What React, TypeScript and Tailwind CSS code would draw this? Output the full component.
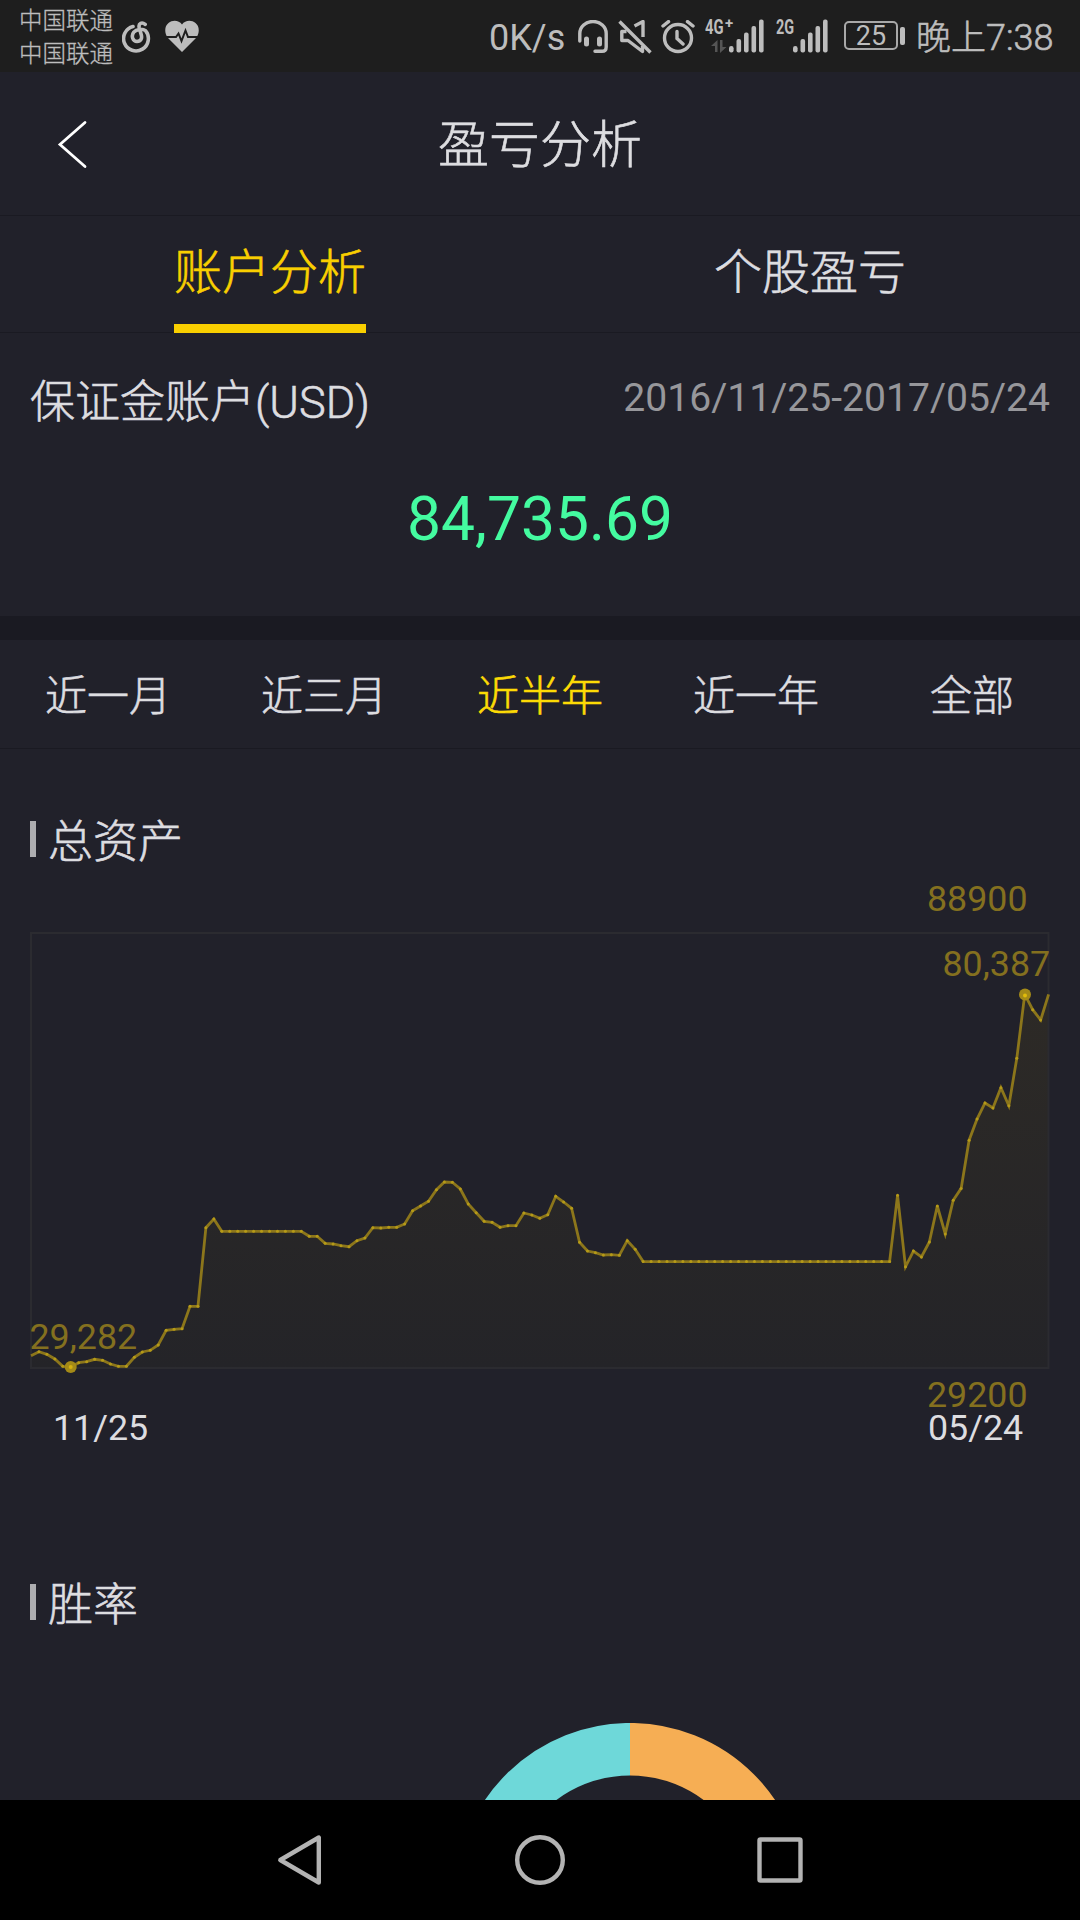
import clsx from "clsx";

const tabs = ["账户分析", "个股盈亏"];
const ranges = ["近一月", "近三月", "近半年", "近一年", "全部"];

// line heights of the asset curve, one per trading day
const curve = [
    1355.7, 1351.7, 1354.3, 1359, 1366.3, 1367, 1362.7, 1361.7, 1359.3, 1360.3, 1364, 1366.3, 1366.3,
    1357.3, 1352, 1350.3, 1345, 1330.3, 1329.3, 1328.7, 1306.3, 1306.3, 1227.7, 1219,
    ...Array(11).fill(1231.3),
    1236.3, 1236.3, 1243.3, 1244, 1245.7, 1246.7, 1240.7, 1238, 1227.7, 1228, 1227.3, 1227.3, 1224,
    1210.7, 1206, 1201.3, 1189.7, 1182, 1182.3, 1189, 1204, 1212.7, 1221.3, 1222.3, 1227.3, 1225.7,
    1225.7, 1213, 1215, 1218.3, 1214.7, 1196.3, 1202, 1208.3, 1242.3, 1251, 1252.7, 1255, 1254.7,
    1255.3, 1240.7, 1249.3,
    ...Array(32).fill(1261.6),
    1195.3, 1266.8, 1251.1, 1256.9, 1242, 1206, 1233.9, 1200.2, 1188.4, 1140.2, 1119.1, 1103, 1108,
    1087.7, 1105.7, 1058.3, 994.4, 1009.7, 1020, 994.4,
];
const points = curve.map((y, i) => [31 + i * 7.95, y]);
const line = points.map((p) => p.join(",")).join(" ");

function Signal() {
    return (
        <svg className="w-[35px] h-[34px]" viewBox="0 0 35 34" fill="#bdbdbd">
            <rect x="0" y="27" width="4.6" height="6.5" rx="2.2"/>
            <rect x="7.5" y="20" width="4.6" height="13.5" rx="2"/>
            <rect x="15" y="13.5" width="4.6" height="20" rx="2"/>
            <rect x="22.5" y="7" width="4.6" height="26.5" rx="2"/>
            <rect x="30" y="0.5" width="4.6" height="33" rx="2"/>
        </svg>
    )
}

function StatusBar() {
    return (
        <div className="flex items-start h-[72px] bg-[#1e1e1e] text-[#bdbdbd]">
            <div className="w-[94px] ml-[19px] pt-[5px] text-[23.5px] leading-[33px] font-light [-webkit-text-stroke:0.3px] whitespace-nowrap">
                <div>中国联通</div>
                <div>中国联通</div>
            </div>
            <svg className="w-[30px] h-[32px] ml-[9px] mt-[21px]" viewBox="0 0 30 32" fill="none" stroke="#bdbdbd"
                 strokeWidth="3.6" strokeLinecap="round">
                <path d="M11 5.5A12.4 12.4 0 1 0 23.5 9.6C20.5 7.5 14.5 8 11.8 11.2C8.8 15 10.8 20.5 15 20.5C19 20.5 20.3 17.2 19.2 13.6L17.2 6.5C16.2 2.2 20 .8 23.2 3.4"/>
            </svg>
            <svg className="w-[34px] h-[32px] ml-[13px] mt-[20px]" viewBox="0 0 34 32">
                <path fill="#bdbdbd"
                      d="M17 32L3 18C-1 13 -.5 6 3.5 3C8 -.5 14 .5 17 4.5C20 .5 26 -.5 30.5 3C34.5 6 35 13 31 18Z"/>
                <path d="M0 17H11L13.5 13.5L16.5 21L20.5 10.5L23 17H34" fill="none" stroke="#1e1e1e" strokeWidth="2"/>
            </svg>
            <div className="w-[76px] ml-[290px] pt-[18px] text-[36px] leading-[40px]">0K/s</div>
            <svg className="w-[30px] h-[34px] ml-[13px] mt-[20px]" viewBox="0 0 30 34" fill="none" stroke="#bdbdbd"
                 strokeWidth="3.4" strokeLinecap="round">
                <path d="M1.8 21V13.5A13.2 12 0 0 1 28.2 13.5V27Q28.2 31.3 24 31.3H17"/>
                <path strokeWidth="5" d="M8.5 19V24M21.5 19V24"/>
            </svg>
            <svg className="w-[34px] h-[34px] ml-[10px] mt-[20px]" viewBox="0 0 34 34" fill="none" stroke="#bdbdbd"
                 strokeWidth="3.4" strokeLinejoin="round">
                <path d="M16.5 6L25 1.5V17M8.5 11.5H3.8V20.5H10L24.5 31.5V26"/>
                <path d="M1.5 1.5L32.5 32.5"/>
            </svg>
            <svg className="w-[34px] h-[34px] ml-[9px] mt-[20px]" viewBox="0 0 34 34" fill="none" stroke="#bdbdbd"
                 strokeWidth="3.4" strokeLinecap="round">
                <circle cx="17" cy="18" r="13.5"/>
                <path d="M16 11.5V18.5L22 24M2 6L7.5 1.6M32 6L26.5 1.6"/>
            </svg>
            <div className="relative w-[60px] ml-[10px] mt-[19px] pl-[24px]">
                <Signal/>
                <span className="absolute left-0 -top-[2px] text-[20px] leading-[20px] font-bold scale-x-[0.74] origin-left">4G</span>
                <span className="absolute left-[20px] -top-[5px] text-[15px] leading-[18px] font-bold">+</span>
                <svg className="absolute left-[6px] top-[21px] w-[16px] h-[13px]" viewBox="0 0 16 13" fill="#555">
                    <path d="M0 6L6.5 0V12H4V6ZM9 0H11.5V7H15.5L9 13Z"/>
                </svg>
            </div>
            <div className="relative w-[52px] ml-[11px] mt-[19px] pl-[17px]">
                <Signal/>
                <span className="absolute left-0 -top-[2px] text-[20px] leading-[20px] font-bold scale-x-[0.72] origin-left">2G</span>
            </div>
            <div className="flex items-center ml-[16px] mt-[21px]">
                <div className="flex items-center justify-center w-[54px] h-[29px] pt-[2px] border-2 border-[#a8a8a8] rounded-[5px] text-[27px] leading-[27px]">25</div>
                <div className="w-[5px] h-[18px] ml-[2px] bg-[#bdbdbd] rounded-[2px]"/>
            </div>
            <div className="ml-[11px] pt-[18px] text-[36px] leading-[40px] font-light [-webkit-text-stroke:0.6px] whitespace-nowrap"><span className="text-[35px]">晚上</span>7:38</div>
        </div>
    )
}

function SectionTitle({text}: { text: string }) {
    return (
        <div className="flex items-center h-[54px] px-[30px]">
            <div className="w-[6px] h-[36px] mr-[12px] bg-[#adadb0]"/>
            <div className="pt-[7px] text-[45px] leading-[54px] font-light [-webkit-text-stroke:0.6px]">{text}</div>
        </div>
    )
}

function AssetChart() {
    return (
        <svg className="block w-full h-[592px]" viewBox="0 868 1080 592" fontSize="35.8" fill="#84701f">
            <defs>
                <linearGradient id="area" x1="0" y1="994" x2="0" y2="1368" gradientUnits="userSpaceOnUse">
                    <stop offset="0" stopColor="#2d2a26"/>
                    <stop offset="1" stopColor="#242428"/>
                </linearGradient>
            </defs>
            <polygon points={`31,1368 ${line} 1048.6,1368`} fill="url(#area)"/>
            <rect x="31" y="933" width="1017.5" height="435" fill="none" stroke="#2b2b30" strokeWidth="2"/>
            <polyline points={line} fill="none" stroke="#8c761b" strokeWidth="2.8"/>
            {points.slice(1, -1).map(([x, y], i) => <circle key={i} cx={x} cy={y} r="1.5" fill="#b59a18"/>)}
            <circle cx="70.7" cy="1367" r="6" fill="#a48a17"/>
            <circle cx="70.7" cy="1367" r="2" fill="#d3b00f"/>
            <circle cx="1025" cy="994.5" r="6" fill="#a48a17"/>
            <circle cx="1025" cy="995.5" r="2" fill="#e0bb0a"/>
            <text x="927" y="911">88900</text>
            <text x="942.5" y="976">80,387</text>
            <text x="29.500" y="1349">29,282</text>
            <text x="927" y="1407">29200</text>
            <text x="53" y="1440" fill="#dddde0">11/25</text>
            <text x="928" y="1440" fill="#dddde0">05/24</text>
        </svg>
    )
}

export default function App() {
    return (
        <div className="flex flex-col w-[1080px] h-[1920px] overflow-hidden bg-[#21212a] text-[#dddde0] font-['Roboto','Noto_Sans_CJK_SC',sans-serif]">
            <StatusBar/>
            <div className="relative flex items-center justify-center h-[144px] shrink-0 border-b border-[#1a1a22]">
                <svg className="absolute left-[57px] top-[48px] w-[32px] h-[50px]" viewBox="0 0 32 50" fill="none" stroke="#fff"
                     strokeWidth="2.8" strokeLinecap="round">
                    <path d="M28 2.5L3 24.5L28 46.5"/>
                </svg>
                <div className="pt-[4px] text-[51px] leading-[60px] font-light [-webkit-text-stroke:0.6px]">盈亏分析</div>
            </div>
            <div className="flex h-[117px] shrink-0 border-b border-[#1a1a22]">
                {tabs.map((tab, i) => (
                    <div key={tab} className="flex flex-1 justify-center">
                        <div className={clsx("h-[117px] pt-[27px] text-[48px] leading-[60px] font-light [-webkit-text-stroke:0.6px]", i === 0 && "text-[#f9cf00] border-b-[9px] border-[#f9cf00]")}>{tab}</div>
                    </div>
                ))}
            </div>
            <div className="h-[283px] shrink-0 px-[30px] pt-[40px]">
                <div className="flex justify-between">
                    <div className="text-[45px] leading-[60px] font-light [-webkit-text-stroke:0.6px]">保证金账户(USD)</div>
                    <div className="text-[39.1px] leading-[50px] text-[#97979b]">2016/11/25-2017/05/24</div>
                </div>
                <div className="mt-[52px] text-center text-[60.5px] leading-[70px] text-[#44fba0]">84,735.69</div>
            </div>
            <div className="h-[24px] shrink-0 bg-[#1a1a22]"/>
            <div className="flex items-center h-[109px] shrink-0 pt-[5px] border-b border-[#1a1a22]">
                {ranges.map((range) => (
                    <div key={range}
                         className={clsx("flex-1 text-center text-[42px] leading-[56px] font-light [-webkit-text-stroke:0.6px]", range === "近半年" && "text-[#fddb05]")}>{range}</div>
                ))}
            </div>
            <div className="h-[1051px] shrink-0 overflow-hidden pt-[63px]">
                <SectionTitle text="总资产"/>
                <div className="mt-[2px]">
                    <AssetChart/>
                </div>
                <div className="mt-[115px]">
                    <SectionTitle text="胜率"/>
                </div>
                <svg className="block w-full h-[350px] mt-[94px]" viewBox="0 1723 1080 350" fill="none" strokeWidth="52.5">
                    <path d="M630 2046.8A148.8 148.8 0 0 1 630 1749.2" stroke="#6ed8d9"/>
                    <path d="M630 1749.2A148.8 148.8 0 0 1 630 2046.8" stroke="#f6ae54"/>
                </svg>
            </div>
            <div className="flex items-center justify-center h-[120px] shrink-0 bg-black">
                <svg className="w-[540px] h-[60px]" viewBox="270 1830 540 60" fill="none" stroke="#b3b3b3" strokeWidth="4.4"
                     strokeLinejoin="round">
                    <path d="M318.8 1837.5V1882.5L280.3 1860Z"/>
                    <circle cx="540" cy="1860" r="22.8"/>
                    <rect x="759.5" y="1839.5" width="41" height="41" rx="1"/>
                </svg>
            </div>
        </div>
    )
}
